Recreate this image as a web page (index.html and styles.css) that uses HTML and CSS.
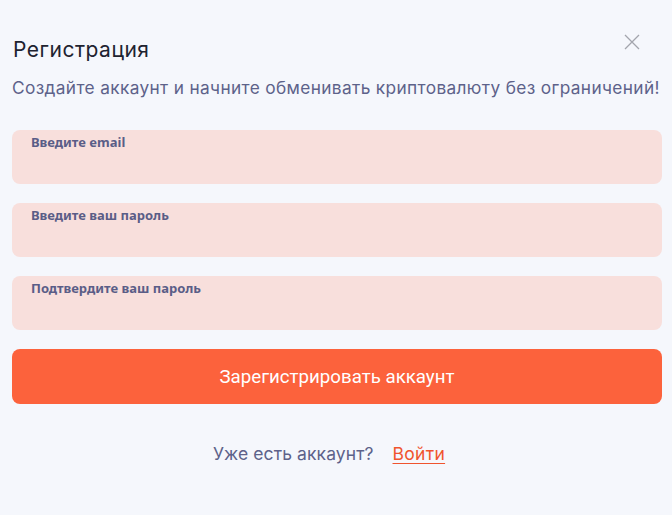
FILE: index.html
```html
<!DOCTYPE html>
<html lang="ru">
<head>
<meta charset="utf-8">
<link rel="stylesheet" href="styles.css">
</head>
<body>
<div class="modal">
  <div class="head">
    <h1 class="title">Регистрация</h1>
    <button class="close" aria-label="Закрыть">
      <svg width="16" height="16" viewBox="0 0 16 16"><path d="M1 1L15 15M15 1L1 15" stroke="#a3a5ad" stroke-width="1.3" fill="none"/></svg>
    </button>
  </div>
  <p class="subtitle">Создайте аккаунт и начните обменивать криптовалюту без ограничений!</p>
  <form class="form">
    <label class="field"><span class="label">Введите email</span></label>
    <label class="field"><span class="label">Введите ваш пароль</span></label>
    <label class="field"><span class="label">Подтвердите ваш пароль</span></label>
    <button type="button" class="submit">Зарегистрировать аккаунт</button>
  </form>
  <div class="footer">
    <span class="muted">Уже есть аккаунт?</span>
    <a class="login" href="#">Войти</a>
  </div>
</div>
</body>
</html>
```
FILE: styles.css
```css
html, body {
  margin: 0;
  padding: 0;
  background: #f5f7fc;
}
body {
  font-family: "Inter", "Noto Sans", sans-serif;
}
.modal {
  padding: 32px 10px 0 12px;
}
.head {
  display: flex;
  justify-content: space-between;
  align-items: flex-start;
}
.title {
  margin: 4px 0 0 1px;
  font-weight: 400;
  font-size: 21px;
  letter-spacing: 0.5px;
  line-height: 28px;
  color: #1e2330;
}
.close {
  background: none;
  border: 0;
  padding: 0;
  margin: 2px 22px 0 0;
  width: 16px;
  height: 16px;
  display: flex;
}
.subtitle {
  margin: 12px 0 0;
  font-size: 17.3px;
  letter-spacing: 0.35px;
  line-height: 24px;
  color: #5d628a;
}
.form {
  margin-top: 30px;
  display: flex;
  flex-direction: column;
  gap: 19px;
}
.field {
  display: block;
  height: 54px;
  box-sizing: border-box;
  background: #f8dfdc;
  border-radius: 8px;
  padding: 1px 19px;
}
.label {
  font-family: "Noto Sans", sans-serif;
  font-weight: 700;
  font-size: 13px;
  line-height: 16px;
  color: #5a5d87;
}
.submit {
  height: 55px;
  border: 0;
  border-radius: 8px;
  background: #fc623c;
  color: #fff;
  font-family: "Roboto", sans-serif;
  font-size: 18.7px;
  cursor: pointer;
}
.footer {
  margin-top: 38px;
  padding-right: 16px;
  display: flex;
  justify-content: center;
  gap: 19px;
  font-size: 17.5px;
  letter-spacing: 0.1px;
  line-height: 24px;
}
.muted {
  color: #5d628a;
}
.login {
  color: #f0542e;
  letter-spacing: 0.3px;
  text-decoration: underline;
  text-underline-offset: 3px;
}
```
